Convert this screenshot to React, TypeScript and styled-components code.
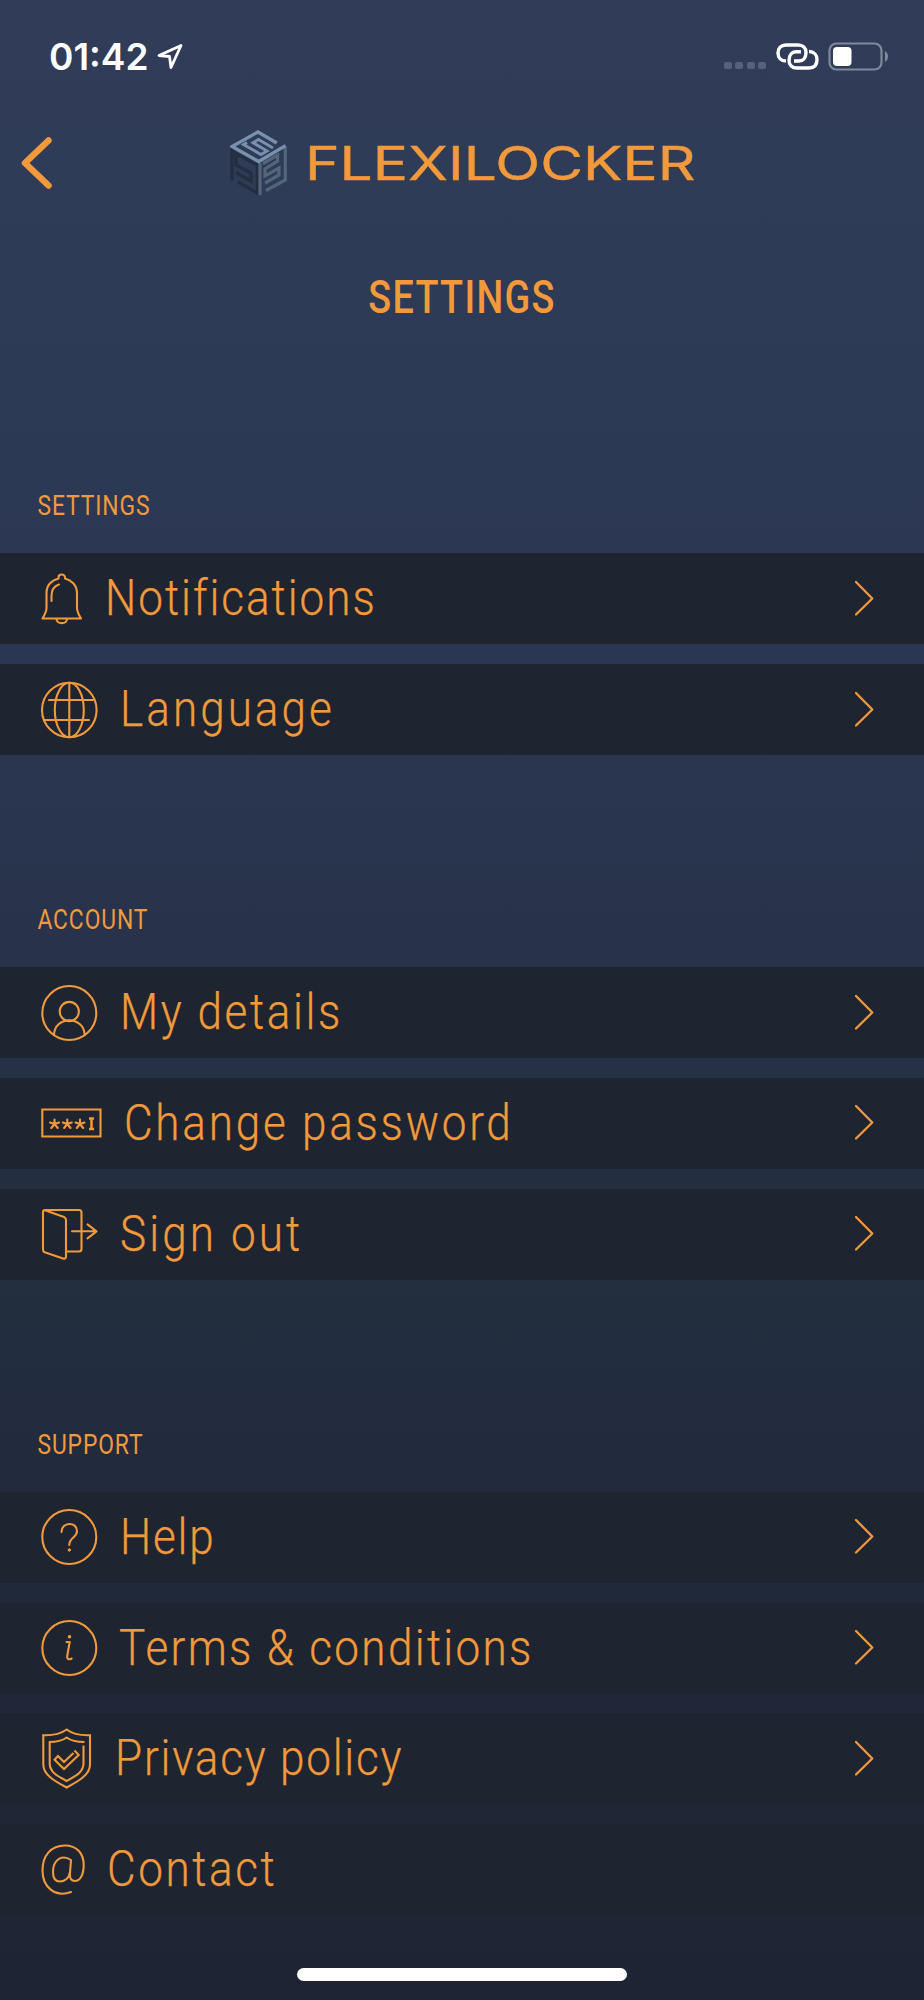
import React, { ReactNode } from 'react';
import styled, { createGlobalStyle } from 'styled-components';

const ORANGE = '#f2993b';

const GlobalStyle = createGlobalStyle`
  *, *::before, *::after { box-sizing: border-box; }
  html, body { margin: 0; padding: 0; background: #1e2433; }
  svg { display: block; flex: none; }
`;

const Screen = styled.main`
  width: 924px;
  height: 2000px;
  overflow: hidden;
  display: flex;
  flex-direction: column;
  color: ${ORANGE};
  font-family: Roboto, 'Liberation Sans', sans-serif;
  background: linear-gradient(180deg, #303c58 0%, #2e3b56 15%, #2b3752 33%, #28324a 48%, #232f40 60%, #222c3e 70%, #20283a 82%, #1e2433 100%);
`;

const StatusBar = styled.header`
  height: 112px;
  display: flex;
  justify-content: space-between;
  padding: 0 35px 0 49px;
  color: #fff;
`;

const StatusGroup = styled.div`
  display: flex;
  align-items: center;
  height: 113px;
`;

const Clock = styled.span`
  width: 101px;
  font: 600 37px/1 Inter, sans-serif;
  white-space: nowrap;
  margin-right: 7px;
`;

const SignalDots = styled.div`
  display: flex;
  gap: 3.6px;
  padding-top: 18px;
  margin-right: 10px;
`;

const Dot = styled.i`
  width: 7.8px;
  height: 7.8px;
  border-radius: 2px;
  background: #56617a;
`;

const Battery = styled.svg`
  margin-left: 9px;
`;

const NavBar = styled.nav`
  height: 102px;
  display: flex;
  align-items: center;
  padding-left: 20px;
`;

const Brand = styled.div`
  display: flex;
  align-items: center;
  margin-left: 176px;
`;

const Wordmark = styled.span`
  margin-left: 17px;
  font: 400 46px/60px Inter, sans-serif;
  white-space: nowrap;
  transform-origin: left center;
  transform: scaleX(1.275);
  -webkit-text-stroke: 0.4px ${ORANGE};
`;

const Title = styled.h1`
  margin: 53px 0 0;
  height: 60px;
  text-align: center;
  font-weight: 500;
  font-size: 46px;
  line-height: 60px;
  letter-spacing: 1.6px;
  transform: scaleX(0.82);
`;

const Group = styled.section`
  display: flex;
  flex-direction: column;
  margin-bottom: 130px;
  &:first-of-type { margin-top: 144.4px; }
`;

const GroupTitle = styled.h2`
  margin: 0;
  height: 82px;
  padding-left: 37.5px;
  font-weight: 400;
  font-size: 27.5px;
  line-height: 70px;
  letter-spacing: 1.1px;
  transform-origin: 37px center;
  transform: scaleX(0.83);
`;

const Rows = styled.div`
  display: flex;
  flex-direction: column;
  gap: 19.8px;
`;

const Row = styled.div`
  height: 91px;
  display: flex;
  align-items: center;
  padding: 0 49px 0 40px;
  background: #1e2531;
`;

const RowLabel = styled.span<{ $gap: number; $track: number }>`
  flex: 1;
  margin-left: ${p => p.$gap}px;
  font-weight: 300;
  font-size: 49.5px;
  line-height: 91px;
  white-space: nowrap;
  letter-spacing: ${p => p.$track}px;
  -webkit-text-stroke: 0.25px ${ORANGE};
  transform-origin: left center;
  transform: scaleX(0.89);
`;

const HomeIndicator = styled.div`
  width: 330px;
  height: 13px;
  margin: -77px auto 0;
  flex: none;
  border-radius: 7px;
  background: #fff;
`;

const Line = ({ w, h, sw = 2.1, children }: { w: number; h: number; sw?: number; children: ReactNode }) => (
  <svg width={w} height={h} viewBox={`0 0 ${w} ${h}`} fill="none" stroke={ORANGE} strokeWidth={sw} strokeLinecap="round" strokeLinejoin="round">
    {children}
  </svg>
);

const Bell = () => (
  <Line w={43} h={52}>
    <path d="M2.500 45.500H41C39 42 37 39 37 35V20C37 12 31 7 25 5.500V4.500C25 .5 18.500 .5 18.500 4.500V5.500C12 7 6.500 12 6.500 20V35C6.500 39 4.500 42 2.500 45.500Z" />
    <path d="M16.500 46C17 51.500 26.500 51.500 27 46M11.500 28V23C11.500 17 14 13 19 11.500" />
  </Line>
);

const Globe = () => (
  <Line w={58} h={58}>
    <circle cx="29.300" cy="29" r="27.300" />
    <ellipse cx="29.300" cy="29" rx="14.500" ry="27.300" />
    <path d="M29.300 2V56M9 19H53M5 39H49" />
  </Line>
);

const Person = () => (
  <Line w={58} h={58}>
    <circle cx="29.300" cy="29" r="27" />
    <circle cx="29.300" cy="27.500" r="9.600" />
    <path d="M14 51C14.500 31.500 44 31.500 44.700 51" />
  </Line>
);

const star = (x: number) => `M${x} 16V11.500M${x} 16L${x - 4.500} 14.500M${x} 16L${x + 4.500} 14.500M${x} 16L${x - 3.200} 20M${x} 16L${x + 3.200} 20`;

const Password = () => (
  <Line w={62} h={30}>
    <path strokeLinejoin="miter" d="M2.300 1.500H60.500V28.500H2.300Z" />
    <path d={star(14.500) + star(27.300) + star(40)} />
    <path strokeLinecap="butt" strokeWidth="2.500" d="M49 10.500H54M49 21H54M51.500 10.500V21" />
  </Line>
);

const Door = () => (
  <Line w={58} h={54}>
    <path d="M26 44.500H39C40.500 44.500 41.500 43.500 41.500 42V5.500C41.500 4 40.500 3 39 3H5C3.500 3 3 4 3 5.500V42.500C3 44 3.500 44.700 4.700 45.200L23 51.500C25 52 26 51.200 26 49.700V13C26 11.500 25 10.500 24 10L5 3.300" />
    <path d="M32 24.300H56.500M47.500 17.300L56.500 24.300L47.500 31.300" />
  </Line>
);

const Help = () => (
  <Line w={58} h={58}>
    <circle cx="29.300" cy="29" r="27" />
    <path d="M21.500 24C21.500 13.500 37 13.500 37 23C37 30 29.300 29 29.300 37" />
    <circle cx="29.300" cy="42" r="1.200" fill={ORANGE} strokeWidth="1" />
  </Line>
);

const Info = () => (
  <Line w={58} h={58}>
    <circle cx="29.300" cy="29" r="27" />
    <path d="M26.500 23H29.700L27.200 37C26.700 40.500 29 41 31.700 39.500" />
    <circle cx="29.500" cy="17.800" r="1.200" fill={ORANGE} strokeWidth="1.200" />
  </Line>
);

const Shield = () => (
  <Line w={54} h={62}>
    <g strokeLinejoin="miter" strokeLinecap="butt">
      <path d="M26.700 1.500C20 6.500 12 7.500 3.300 7.200V36.500C3.300 46.500 14 53 26.700 59.500C39 53 50 46.500 50 36.500V7.200C41 7.500 33 6.500 26.700 1.500Z" />
      <path d="M44.500 14C38 14 32 13.500 26.700 9.500C21 13.500 15 14 9.700 14V35.500C9.700 44 17 48 26.700 53C36 48 43.500 44 43.500 35.500V17.500" />
      <path d="M33.500 25L24 34L18 28L14.500 31.700L24 41L38.700 27L34.500 22.500" />
    </g>
  </Line>
);

const At = () => (
  <Line w={46} h={54}>
    <path d="M31 49C15 55 2.500 44 2.500 27.500C2.500 12.500 11 2.500 25 2.500C36.500 2.500 43.700 10 43.700 22C43.700 32 40 38 35 38C31 38 29.500 35 30 30L31 17C28 15 26 14.500 24 14.500C17 14.500 13 21 13 29C13 35 15 38.500 20 38.500C25 38.500 29 35 30 29" />
  </Line>
);

const Chevron = () => (
  <Line w={22} h={38} sw={2.3}>
    <path d="M3 2L19.300 18.500L3 34.500" />
  </Line>
);

const Cube = () => (
  <svg width="58" height="66" viewBox="0 0 58 66" fill="none" strokeWidth="3.200">
    <g stroke="#232e40">
      <path d="M2 17V50.500M27.300 33V63L8 52M27.300 35L6 23.500V35L21 43V51L6 42.500" />
    </g>
    <g stroke="#526579">
      <path d="M30 33V65M55.300 17V50L36 60.500M33 33.500L47.500 25V31L35 39V46L49 38V45L35 53" />
    </g>
    <g stroke="#7791af" strokeWidth="3.300">
      <path d="M46.700 13L28 2L2 16.500L28.700 31.500L55.500 15.700" />
      <path strokeWidth="2.900" d="M43 18L28.500 9.500L23 12.700L37 21L31 24.500L13.500 14.500L17 12.500" />
    </g>
  </svg>
);

type Item = { label: string; icon: ReactNode; gap: number; track: number; more?: boolean };

const groups: { title: string; items: Item[] }[] = [
  {
    title: 'SETTINGS',
    items: [
      { label: 'Notifications', icon: <Bell />, gap: 21.5, track: 2.2 },
      { label: 'Language', icon: <Globe />, gap: 21.5, track: 3.4 },
    ],
  },
  {
    title: 'ACCOUNT',
    items: [
      { label: 'My details', icon: <Person />, gap: 21.5, track: 2.9 },
      { label: 'Change password', icon: <Password />, gap: 22, track: 3.1 },
      { label: 'Sign out', icon: <Door />, gap: 22, track: 3.5 },
    ],
  },
  {
    title: 'SUPPORT',
    items: [
      { label: 'Help', icon: <Help />, gap: 21.5, track: 2 },
      { label: 'Terms & conditions', icon: <Info />, gap: 20.5, track: 2.6 },
      { label: 'Privacy policy', icon: <Shield />, gap: 20.5, track: 2 },
      { label: 'Contact', icon: <At />, gap: 20.5, track: 2.9, more: false },
    ],
  },
];

export default function App() {
  return (
    <>
      <GlobalStyle />
      <Screen>
        <StatusBar>
          <StatusGroup>
            <Clock>01:42</Clock>
            <svg width="27" height="27" viewBox="0 0 27 27" fill="none" stroke="#fff" strokeWidth="2.800" strokeLinejoin="round">
              <path d="M24 2.500L2 12.500L12.500 13.500L14 24.500Z" />
            </svg>
          </StatusGroup>
          <StatusGroup>
            <SignalDots><Dot /><Dot /><Dot /><Dot /></SignalDots>
            <svg width="43" height="27" viewBox="0 0 43 27" fill="none" stroke="#fff" strokeWidth="3.400" strokeLinecap="butt">
              <path d="M10 18C5 18 2 15 2 10C2 5 5 2 10 2H22C27 2 30 5 30 9.500C30 15 27 18 23 18H18" />
              <path d="M33 8.500C38 8.500 41 12 41 16.500C41 22 38 25 33 25H21C16 25 13 22 13 17.500C13 12 16 8.800 20 8.800H25" />
            </svg>
            <Battery width="61" height="29" viewBox="0 0 61 29">
              <rect x="1.500" y="1.500" width="52" height="26" rx="7" fill="none" stroke="#7f899c" strokeWidth="2.200" />
              <rect x="5" y="5" width="18.500" height="19" rx="4" fill="#fff" />
              <path d="M57 9C61 11 61 18 57 20Z" fill="#7f899c" />
            </Battery>
          </StatusGroup>
        </StatusBar>
        <NavBar>
          <Line w={34} h={54} sw={6.500}>
            <path d="M28.500 4.500L5 27L28.500 49.500" />
          </Line>
          <Brand>
            <Cube />
            <Wordmark>FLEXILOCKER</Wordmark>
          </Brand>
        </NavBar>
        <Title>SETTINGS</Title>
        {groups.map(group => (
          <Group key={group.title}>
            <GroupTitle>{group.title}</GroupTitle>
            <Rows>
              {group.items.map(item => (
                <Row key={item.label}>
                  {item.icon}
                  <RowLabel $gap={item.gap} $track={item.track}>{item.label}</RowLabel>
                  {item.more !== false && <Chevron />}
                </Row>
              ))}
            </Rows>
          </Group>
        ))}
        <HomeIndicator />
      </Screen>
    </>
  );
}
